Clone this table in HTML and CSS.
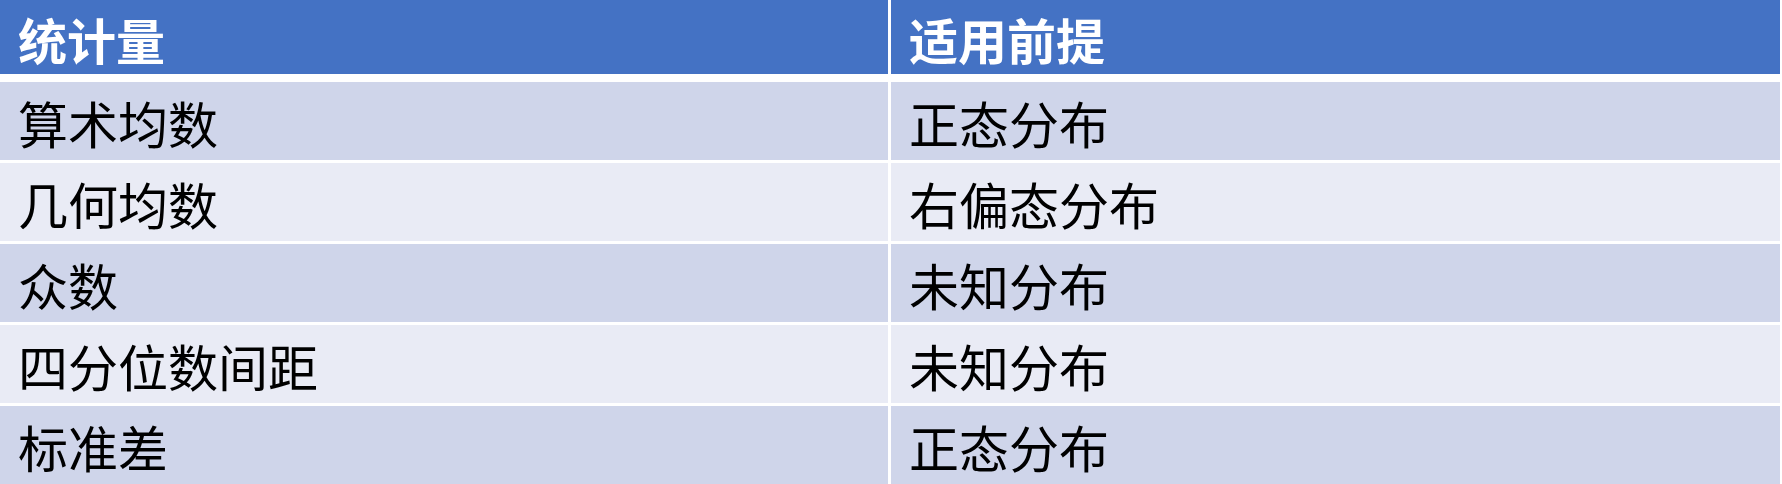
FILE: index.html
```html
<!DOCTYPE html>
<html lang="zh-CN">
<head>
<meta charset="utf-8">
<title>统计量</title>
<link rel="stylesheet" href="styles.css">
</head>
<body>
<div class="table">
  <div class="row head">
    <div class="cell">统计量</div>
    <div class="cell">适用前提</div>
  </div>
  <div class="row odd">
    <div class="cell">算术均数</div>
    <div class="cell">正态分布</div>
  </div>
  <div class="row even">
    <div class="cell">几何均数</div>
    <div class="cell">右偏态分布</div>
  </div>
  <div class="row odd">
    <div class="cell">众数</div>
    <div class="cell">未知分布</div>
  </div>
  <div class="row even">
    <div class="cell">四分位数间距</div>
    <div class="cell">未知分布</div>
  </div>
  <div class="row odd">
    <div class="cell">标准差</div>
    <div class="cell">正态分布</div>
  </div>
</div>
</body>
</html>
```
FILE: styles.css
```css
html, body {
  margin: 0;
  padding: 0;
  background: #ffffff;
}

.table {
  width: 1780px;
  display: flex;
  flex-direction: column;
  gap: 3px;
  font-family: "Noto Sans CJK SC", "Noto Sans", sans-serif;
}

.row {
  display: grid;
  grid-template-columns: 888px 1fr;
  column-gap: 3px;
  height: 78px;
}

.row.head {
  height: 74px;
  margin-bottom: 5px;
}

.cell {
  display: flex;
  align-items: center;
  padding-left: 18px;
  padding-top: 2px;
  font-size: 50px;
  line-height: 1;
  color: #000000;
}

.head .cell {
  background: #4472c4;
  color: #ffffff;
  font-weight: 700;
  font-size: 49px;
}

.odd .cell {
  background: #cfd5ea;
}

.even .cell {
  background: #e9ebf5;
}
```
